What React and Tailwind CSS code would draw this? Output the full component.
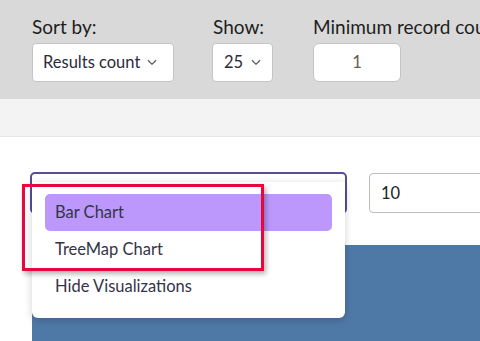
import React from 'react';

const font = { fontFamily: 'Lato, "Noto Sans", sans-serif' };

function Chevron({ className = '' }) {
  return (
    <svg viewBox="0 0 12 8" className={`w-[10px] h-[7px] shrink-0 ${className}`} fill="none">
      <path d="M1.5 1.5 6 6l4.5-4.5" stroke="#666" strokeWidth="1.6" strokeLinecap="round" strokeLinejoin="round" />
    </svg>
  );
}

export default function App() {
  return (
    <div className="w-[480px] h-[341px] overflow-hidden relative bg-white text-[#222]" style={font}>
      {/* Filter bar */}
      <div className="h-[99px] bg-[#d9d9d9] flex pl-8 pt-[14px] whitespace-nowrap">
        <div className="flex flex-col w-[180px] shrink-0">
          <span className="text-[19px] leading-[25px] text-[#1e1e1e]">Sort by:</span>
          <div className="mt-[4px] w-[142px] h-[39px] bg-white border border-[#c4c4c4] rounded-[4px] flex items-center gap-[7px] pl-[10px] text-[16.5px] text-[#2b2b3a]">
            Results count <Chevron />
          </div>
        </div>
        <div className="flex flex-col w-[101px] shrink-0">
          <span className="text-[19px] leading-[25px] text-[#1e1e1e] pl-px">Show:</span>
          <div className="mt-[4px] w-[61px] h-[39px] bg-white border border-[#c4c4c4] rounded-[4px] flex items-center gap-[8px] pl-[11px] text-[16.5px] text-[#2b2b3a]">
            25 <Chevron />
          </div>
        </div>
        <div className="flex flex-col shrink-0">
          <span className="text-[19px] leading-[25px] text-[#1e1e1e]">Minimum record count</span>
          <div className="mt-[4px] w-[88px] h-[39px] bg-white border border-[#c4c4c4] rounded-[6px] flex items-center justify-center text-[16.5px] text-[#6a5a50]">
            1
          </div>
        </div>
      </div>
      <div className="h-[38px] bg-[#f3f3f3] border-b border-[#e6e6e6]" />

      {/* Visualization controls */}
      <div className="pt-[35px] pl-[30px] flex items-start gap-[22px]">
        <div className="shrink-0 w-[317px] h-[42px] border-2 border-[#5b4b9b] rounded-[5px] bg-white" />
        <div className="shrink-0 mt-px w-[120px] h-[40px] border border-[#bdbdbd] rounded-[4px] flex items-center pl-[11px] text-[16.5px] text-[#222]">
          10
        </div>
      </div>
      <div className="mt-[31px] ml-8 h-[120px] bg-[#4e78a6]" />

      {/* Open dropdown menu */}
      <div className="absolute left-8 top-[182px] w-[313px] h-[136px] bg-white rounded-b-[6px] shadow-[0_2px_8px_rgba(0,0,0,0.18)] px-[13px] pt-[12px] text-[16.5px] text-[#343447]">
        <div className="h-[37px] bg-[#bc98fd] rounded-[5px] flex items-center pl-[10px]">Bar Chart</div>
        <div className="h-[37px] flex items-center pl-[10px]">TreeMap Chart</div>
        <div className="h-[37px] flex items-center pl-[10px]">Hide Visualizations</div>
      </div>

      {/* Annotation */}
      <div className="absolute left-[22px] top-[184px] w-[242px] h-[87px] border-[3px] border-[#e8063c] shadow-[2px_3px_5px_rgba(0,0,0,0.3)]" />
    </div>
  );
}
